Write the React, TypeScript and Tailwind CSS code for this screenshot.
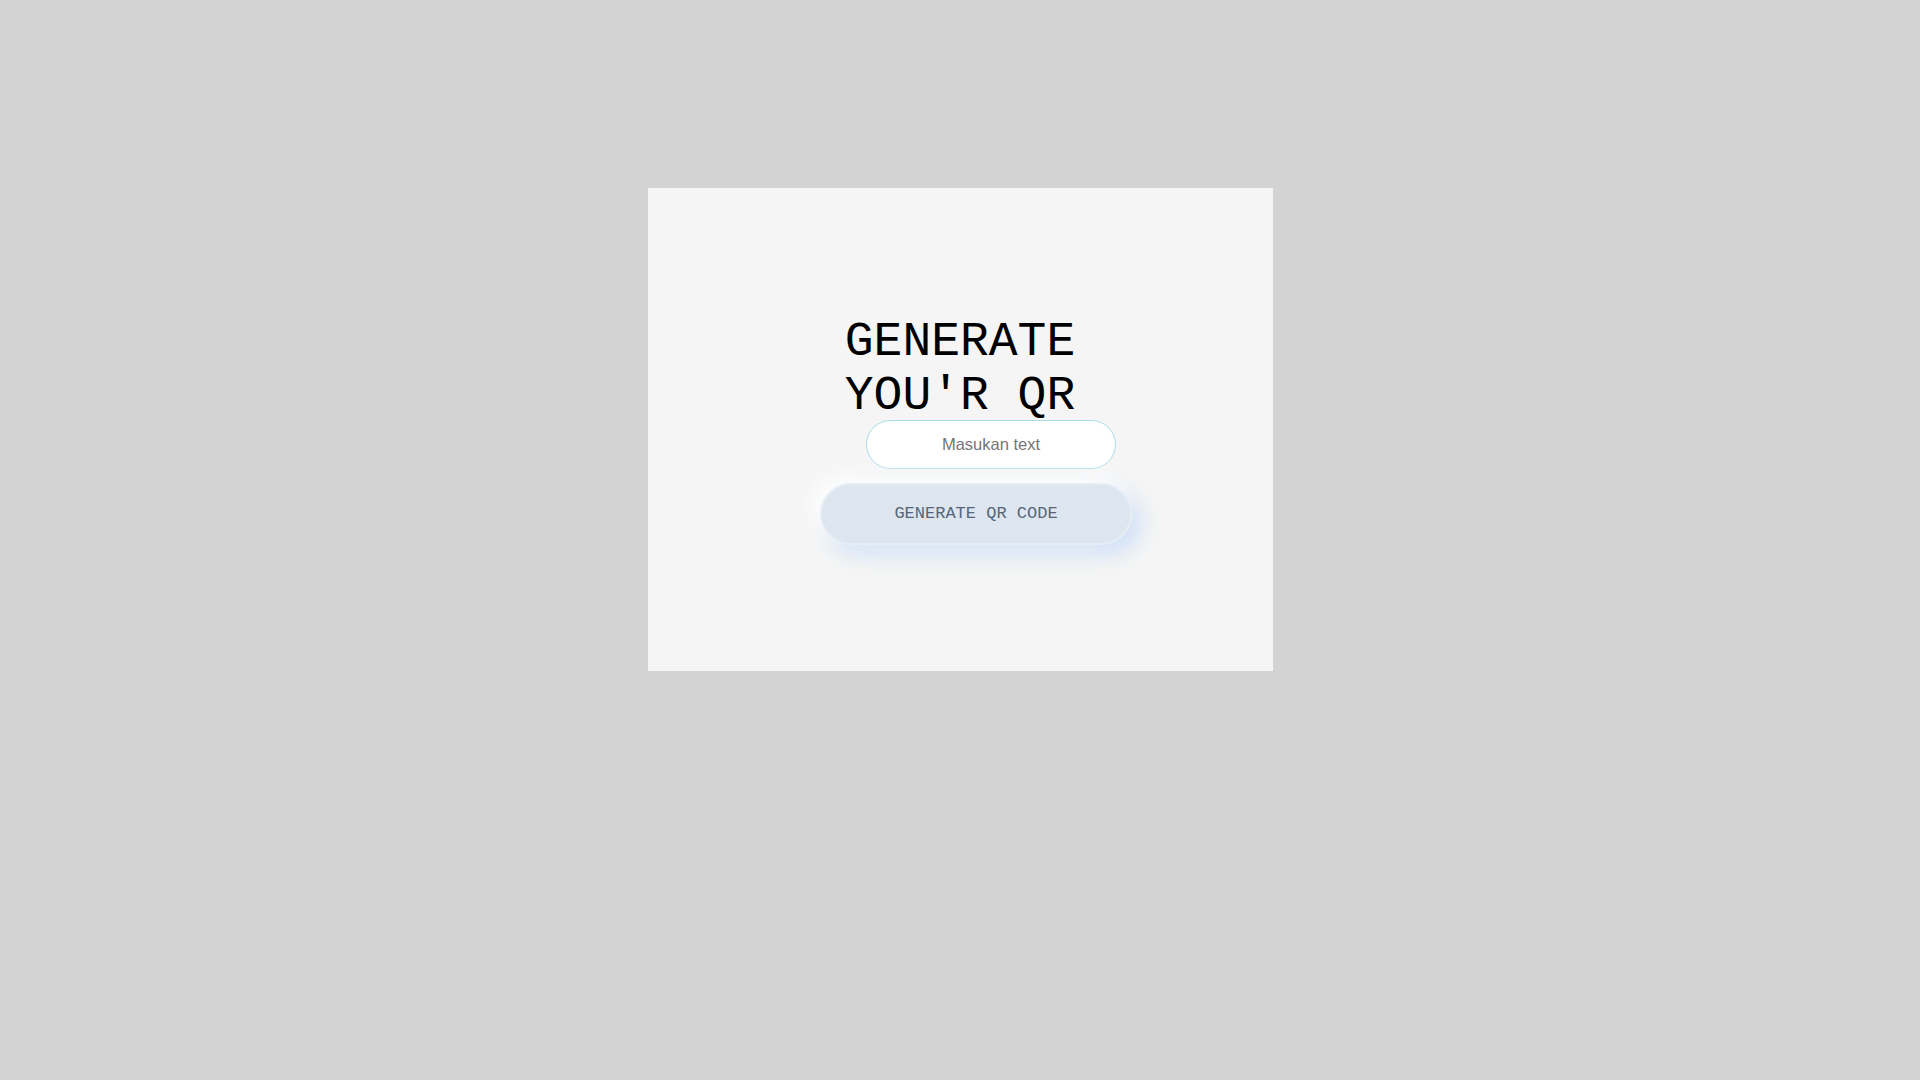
export default function App() {
  return (
    <div className="min-h-screen bg-[#d3d3d3] pt-[188px]">
      <div className="mx-auto flex h-[483px] w-[625px] flex-col items-center bg-[#f5f5f5] pt-[127px]">
        <h1 className="w-[240px] text-center font-['Courier_New','Nimbus_Mono_PS','FreeMono','Liberation_Mono',monospace] text-[48px] font-normal leading-[54px] text-black">
          GENERATE YOU'R QR
        </h1>
        <input
          type="text"
          placeholder="Masukan text"
          className="ml-[62px] mt-[-3px] h-[49px] w-[250px] rounded-full border border-[#a8dbea] bg-white px-4 text-center font-['Liberation_Sans',Arial,sans-serif] text-[16.5px] text-gray-700 outline-none placeholder:text-[#757575]"
        />
        <button className="ml-[32px] mt-[14px] h-[62px] w-[312px] rounded-full border-2 border-[#e7edf5] bg-[#dde6ef] font-['Courier_New','Nimbus_Mono_PS','FreeMono','Liberation_Mono',monospace] text-[17px] text-[#56657a] shadow-[-8px_-8px_20px_rgba(255,255,255,0.9),8px_8px_22px_rgba(150,195,250,0.45)]">
          GENERATE QR CODE
        </button>
      </div>
    </div>
  );
}
